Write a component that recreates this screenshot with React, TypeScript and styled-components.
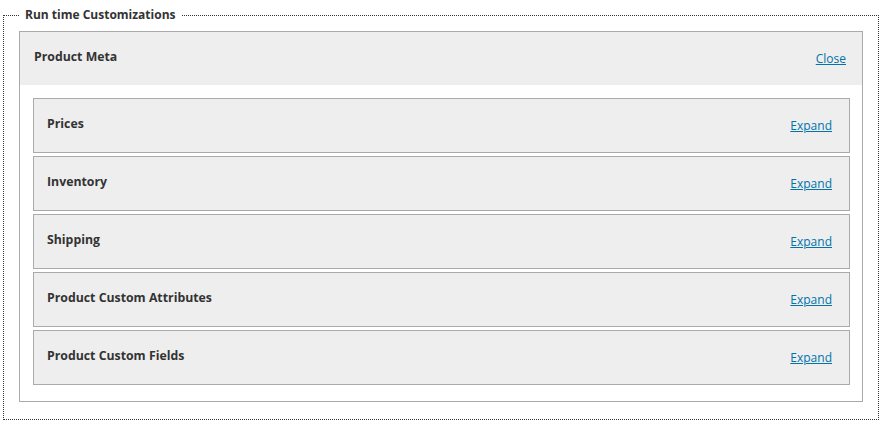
import React from "react";
import styled, { createGlobalStyle } from "styled-components";

const Global = createGlobalStyle`
  html, body { margin: 0; padding: 0; background: #fff; }
  body { font-family: "Open Sans", "Segoe UI", Arial, sans-serif; color: #333; }
`;

const Fieldset = styled.fieldset`
  margin: 8px 5px 0 3px;
  padding: 9px 15px 17px 15px;
  border: 1px dotted #333;
  min-width: 0;
`;

const Legend = styled.legend`
  margin-left: 1px;
  padding: 0 5px;
  font-size: 12px;
  font-weight: 700;
  color: #333;
  line-height: 14px;
`;

const Panel = styled.div`
  border: 1px solid #aaa;
  background: #fff;
`;

const PanelHeader = styled.div`
  background: #eee;
  height: 53px;
  display: flex;
  align-items: center;
  justify-content: space-between;
  padding: 0 16px 0 14px;
`;

const Title = styled.span`
  font-size: 12.3px;
  font-weight: 700;
  color: #333;
  margin-bottom: 4px;
`;

const Link = styled.a`
  font-size: 12px;
  color: #0073aa;
  text-decoration: underline;
  cursor: pointer;
`;

const PanelBody = styled.div`
  padding: 13px 12px 16px 13px;
  display: flex;
  flex-direction: column;
  gap: 3px;
`;

const Item = styled.div`
  border: 1px solid #aaa;
  background: #eee;
  height: 53px;
  display: flex;
  align-items: center;
  justify-content: space-between;
  padding: 0 17px 0 13px;
`;

const items = ["Prices", "Inventory", "Shipping", "Product Custom Attributes", "Product Custom Fields"];

export default function App() {
  return (
    <>
      <Global />
      <Fieldset>
        <Legend>Run time Customizations</Legend>
        <Panel>
          <PanelHeader>
            <Title>Product Meta</Title>
            <Link>Close</Link>
          </PanelHeader>
          <PanelBody>
            {items.map((t) => (
              <Item key={t}>
                <Title>{t}</Title>
                <Link>Expand</Link>
              </Item>
            ))}
          </PanelBody>
        </Panel>
      </Fieldset>
    </>
  );
}
